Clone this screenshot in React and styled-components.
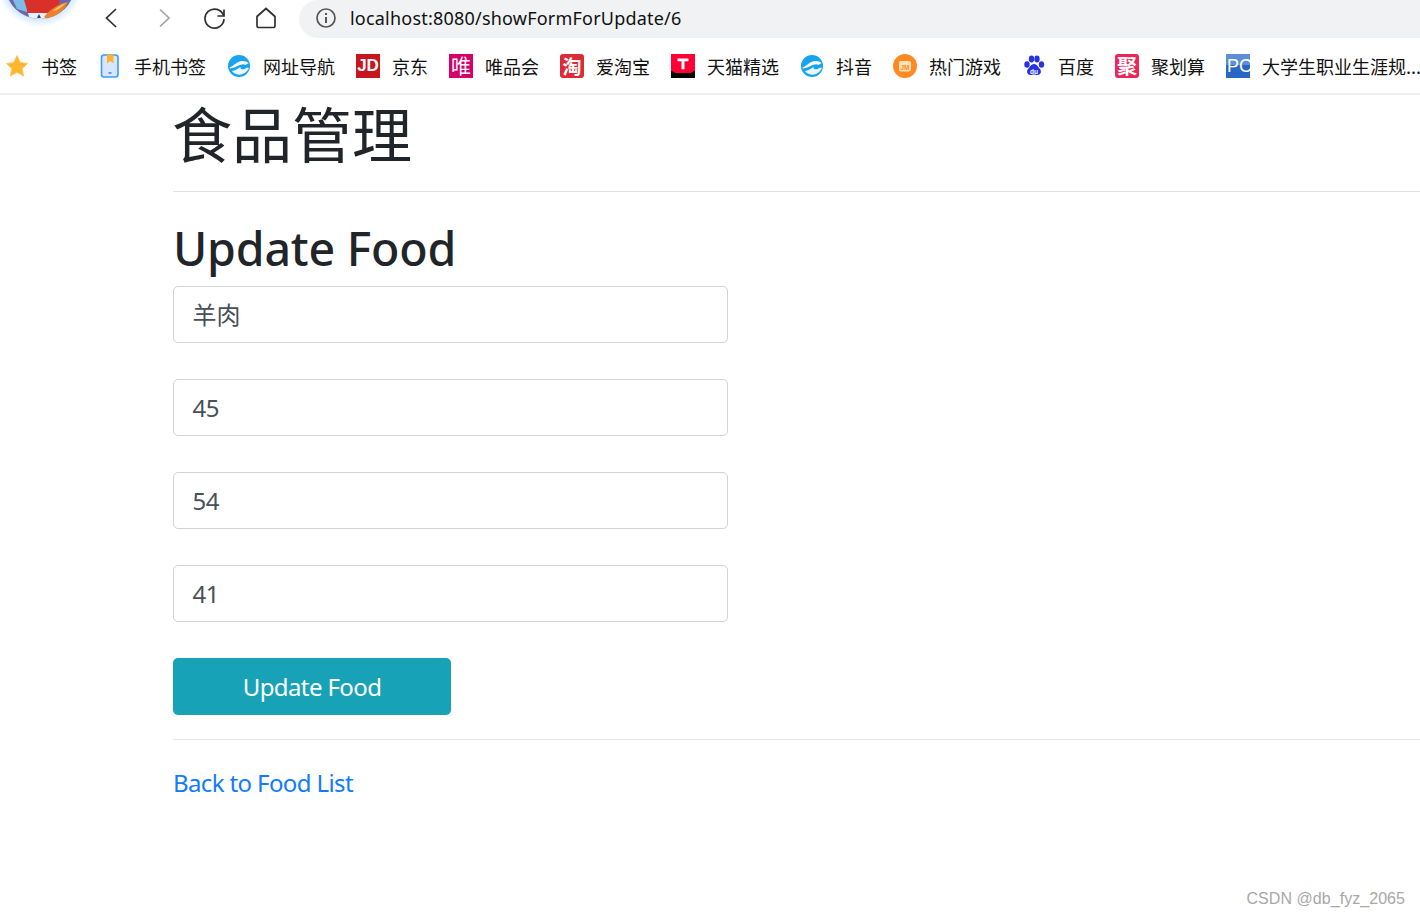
import React from 'react';
import styled, { createGlobalStyle } from 'styled-components';

const Global = createGlobalStyle`
  html, body { margin: 0; padding: 0; background: #fff; }
  body { font-family: "Noto Sans", "Noto Sans CJK SC", sans-serif; width: 1420px; height: 916px; overflow: hidden; position: relative; }
  * { box-sizing: border-box; }
`;
const cjk = `"Noto Sans CJK SC", "Noto Sans", sans-serif`;

const TopBar = styled.div`
  height: 38px; display: flex; align-items: center; position: relative; overflow: hidden;
`;
const Avatar = styled.svg`
  position: absolute; left: 0; top: 0; width: 90px; height: 30px;
`;
const NavBtn = styled.svg`
  width: 24px; height: 24px; flex: none; margin-left: ${p => p.$ml}px; margin-top: -3px; fill: none;
  stroke: ${p => p.$dim ? '#a3a3a3' : '#2f2f2f'}; stroke-width: 1.7;
`;
const UrlPill = styled.div`
  margin-left: 21px; flex: 1; height: 38px; background: #f0f2f4;
  border-radius: 20px 0 0 20px; display: flex; align-items: center; padding: 0 0 2px 16px; gap: 13px;
  color: #111; font-size: 18px; letter-spacing: .21px;
`;
const BookmarkBar = styled.div`
  height: 57px; border-bottom: 2px solid #f0f0f0; display: flex; align-items: center; gap: 21px; padding: 1px 0 0 5px;
  overflow: hidden; white-space: nowrap;
`;
const Bookmark = styled.div`
  display: flex; align-items: center; flex: none; font-family: ${cjk}; font-size: 18px; line-height: 24px; color: #111;
`;
const BmIcon = styled.span`
  width: 24px; height: 24px; flex: none; margin-right: 12px; display: flex; align-items: center; justify-content: center;
  margin-top: -1px;
  & > svg { display: block; }
`;
const Tile = styled.span`
  width: 24px; height: 24px; background: ${p => p.$bg}; border-radius: ${p => p.$r ?? 0}px; color: #fff;
  font-family: ${p => p.$latin ? '"Liberation Sans", sans-serif' : cjk}; font-size: ${p => p.$fs ?? 18}px; font-weight: ${p => p.$fw ?? 400};
  line-height: 24px; text-align: center; display: block;
`;
const Main = styled.main`
  padding-left: 173px;
`;
const Heading = styled.h1`
  margin: 0; font-family: ${cjk}; font-weight: 400; font-size: 60px; line-height: 72px; height: 97px; color: #212529; border-bottom: 1px solid #dee2e6;
  padding-top: 1px; text-indent: -1px;
`;
const Sub = styled.h2`
  margin: 0; padding-top: 21px; font-size: 46.5px; line-height: 70px; height: 94px; font-weight: 500; color: #212529; letter-spacing: -.2px;
`;
const Form = styled.form`
  display: flex; flex-direction: column; gap: 36px; align-items: flex-start;
`;
const Field = styled.div`
  width: 555px; height: 57px; border: 1px solid #ced4da; border-radius: 5px; padding: 0 18.5px ${p => p.$cjk ? 2 : 0}px; display: flex; align-items: center;
  font-size: 24px; letter-spacing: ${p => p.$cjk ? 0 : -.5}px; color: #495057; font-family: "Noto Sans", "Noto Sans CJK SC", sans-serif;
`;
const Submit = styled.button`
  width: 278px; height: 57px; background: #17a2b8; color: #fff; border: 0; border-radius: 5px; font: inherit; font-size: 24px; letter-spacing: -.6px;
`;
const Rule = styled.hr`
  margin: 24px 0 0; border: 0; border-top: 1px solid #e3e5e8;
`;
const BackLink = styled.a`
  display: block; margin-top: 25px; font-size: 24px; line-height: 36px; letter-spacing: -.62px; color: #0f7bff; text-decoration: none;
`;
const Watermark = styled.div`
  position: absolute; right: 15px; bottom: 8px; font-family: "Liberation Sans", sans-serif; font-size: 16px; color: #a8a8a8; letter-spacing: .05px;
`;

const Star = () => <svg width="24" height="24" viewBox="0 0 24 24"><path d="M12 1.500l3.300 7 7.200 1-5.300 5 1.400 7.500-6.600-3.700-6.600 3.700 1.400-7.500-5.300-5 7.200-1z" fill="#ffb52e" stroke="#ffc95e" strokeLinejoin="round" /></svg>;
const Phone = () => <svg width="24" height="24" viewBox="0 0 24 24"><rect x="3.500" y="1" width="16.500" height="22" rx="2.500" fill="#d6e6ff" stroke="#3d9bf5" strokeWidth="1.600"/><path d="M9 .5h6.500v9l-3.250-2.500L9 9.500z" fill="#ffb02e"/><path d="M10.500 19h3" stroke="#3d78c5" strokeWidth="1.400"/></svg>;
const Edge = () => <svg width="24" height="24" viewBox="0 0 24 24"><circle cx="12" cy="12" r="11" fill="#18a3ee"/><path d="M2.500 13.500c4-1 7-6.500 13-6.500 2.500 0 5 .8 6 2l-3 2c-4-2.500-8 2.500-15.500 3.500z" fill="#fff"/><path d="M5 17c3-.5 6-2.500 8.500-4-.5 2.500 3 3.500 6.500.5l2 .5c-2 4-6.500 7.500-11 6.500C8 20 6 19 5 17z" fill="#fff" opacity=".9"/></svg>;
const Game = () => <svg width="24" height="24" viewBox="0 0 24 24"><circle cx="12" cy="12" r="12" fill="#ff8a24"/><rect x="6" y="7" width="12" height="10.500" rx="2" fill="#ffe2b8"/><text x="12" y="15.500" textAnchor="middle" fontSize="6.500" fontWeight="700" fill="#ff8a24" fontFamily="Liberation Sans">JM</text></svg>;
const Paw = () => <svg width="24" height="24" viewBox="0 0 24 24" fill="#2932e1"><ellipse cx="5" cy="10.500" rx="2.700" ry="3.200"/><ellipse cx="9.500" cy="5" rx="2.700" ry="3.400"/><ellipse cx="15" cy="5" rx="2.700" ry="3.400"/><ellipse cx="19.500" cy="10.500" rx="2.700" ry="3.200"/><path d="M12 10c-3 0-4 3-6 5-2 2.500-.5 6 2.500 6 1.500 0 2.300-.5 3.500-.5s2 .5 3.500.5c3 0 4.500-3.500 2.500-6-2-2-3-5-6-5z"/><text x="12" y="19.500" textAnchor="middle" fontSize="6.500" fill="#fff" fontWeight="700" fontFamily="Liberation Sans">du</text></svg>;
const TmallT = () => <svg width="24" height="24" viewBox="0 0 24 24"><rect width="24" height="24" fill="#000"/><path d="M0 0h24v17c-2 0-3 1-4 2H4c-1-1-2-2-4-2z" fill="#ff0036"/><path d="M6.500 4.500h11v2.800h-4v8h-3v-8h-4z" fill="#fff"/></svg>;
const PC = () => <svg width="24" height="24" viewBox="0 0 24 24"><rect width="24" height="24" fill="#2a66c4"/><rect y="0" width="24" height="11" fill="#5c8fd8"/><text x="1" y="18" fontSize="18" fill="#fff" fontFamily="Liberation Sans">PC</text></svg>;

const marks = [
  [<Star />, '书签'],
  [<Phone />, '手机书签'],
  [<Edge />, '网址导航'],
  [<Tile $bg="#c9151e" $fs={17} $fw={700} $latin>JD</Tile>, '京东'],
  [<Tile $bg="#d4006b" $fs={20}>唯</Tile>, '唯品会'],
  [<Tile $bg="#dd2a34" $r={3} $fs={19} $fw={700}>淘</Tile>, '爱淘宝'],
  [<TmallT />, '天猫精选'],
  [<Edge />, '抖音'],
  [<Game />, '热门游戏'],
  [<Paw />, '百度'],
  [<Tile $bg="#ee2557" $r={3} $fs={20} $fw={700}>聚</Tile>, '聚划算'],
  [<PC />, '大学生职业生涯规...'],
];

export default function App() {
  return (
    <>
      <Global />
      <TopBar>
        <Avatar viewBox="0 0 90 30">
          <defs>
            <radialGradient id="glow" gradientUnits="userSpaceOnUse" cx="40" cy="-16" r="43">
              <stop offset="0.8" stopColor="#cfe8fb" />
              <stop offset="1" stopColor="#ffffff" />
            </radialGradient>
            <clipPath id="disc"><circle cx="40" cy="-16" r="35" /></clipPath>
          </defs>
          <circle cx="40" cy="-16" r="43" fill="url(#glow)" />
          <g clipPath="url(#disc)">
            <rect x="0" y="-20" width="90" height="50" fill="#6a67ad" />
            <path d="M13 0h15l-1 12-10-3z" fill="#7dbdec" />
            <path d="M24 0h36l-3 10-10 3H28z" fill="#d9302a" />
            <path d="M28 13h20l-2 7H30z" fill="#e6f1fb" />
            <path d="M37 18l2-4 2 4z" fill="#2c3f6b" />
            <path d="M68 2c-7 1-17 6-24 15l5 3c9-3 15-10 19-18z" fill="#f07f2c" />
            <path d="M66 3c-6 2-10 5-13 8 5-1 9-4 13-8z" fill="#f5cf63" />
          </g>
        </Avatar>
        <NavBtn $ml={100} viewBox="0 0 24 24"><path d="M17 3 L7.500 12 L17 21" transform="translate(-1 0)" /></NavBtn>
        <NavBtn $ml={28} $dim viewBox="0 0 24 24"><path d="M8 3.500 L17 12 L8 20.500" /></NavBtn>
        <NavBtn $ml={27} viewBox="0 0 24 24"><path d="M20.500 9.500A9.500 9.500 0 1 0 21 13" /><path d="M21 3.500v6.500h-6.500" /></NavBtn>
        <NavBtn $ml={27} viewBox="0 0 24 24"><path d="M3 10.500 L12 2.500 L21 10.500 V20 a1.500 1.500 0 0 1 -1.500 1.500 H4.500 A1.500 1.500 0 0 1 3 20 Z" /></NavBtn>
        <UrlPill>
          <svg width="22" height="22" viewBox="0 0 22 22" fill="none" stroke="#555" strokeWidth="1.700"><circle cx="11" cy="11" r="9" /><path d="M11 10v6M11 6v2" strokeWidth="2" /></svg>
          <span>localhost:8080/showFormForUpdate/6</span>
        </UrlPill>
      </TopBar>
      <BookmarkBar>
        {marks.map(([icon, label]) => (
          <Bookmark key={label}><BmIcon>{icon}</BmIcon>{label}</Bookmark>
        ))}
      </BookmarkBar>
      <Main>
        <Heading>食品管理</Heading>
        <Sub>Update Food</Sub>
        <Form>
          <Field $cjk>羊肉</Field>
          <Field>45</Field>
          <Field>54</Field>
          <Field>41</Field>
          <Submit type="button">Update Food</Submit>
        </Form>
        <Rule />
        <BackLink href="#">Back to Food List</BackLink>
      </Main>
      <Watermark>CSDN @db_fyz_2065</Watermark>
    </>
  );
}
